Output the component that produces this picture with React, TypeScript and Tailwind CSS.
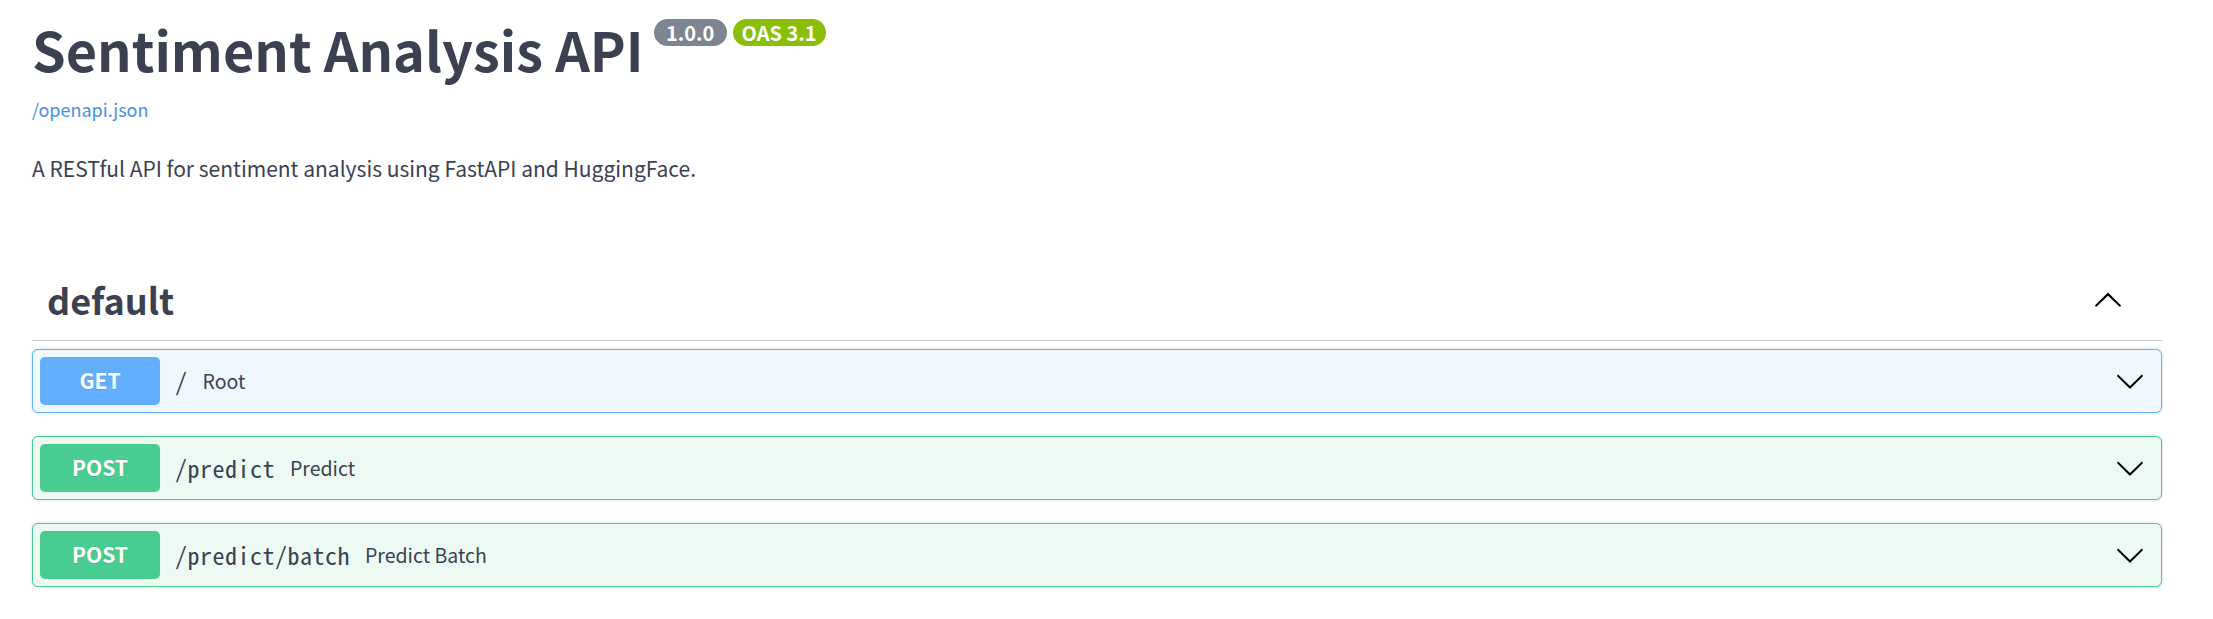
import React from "react";

const ArrowDown = () => (
  <svg width="30" height="30" viewBox="0 0 20 20" className="shrink-0">
    <path
      fill="#000"
      d="M17.418 6.109c.272-.268.709-.268.979 0s.271.701 0 .969l-7.908 7.83c-.27.268-.707.268-.979 0l-7.908-7.83c-.27-.268-.27-.701 0-.969.271-.268.709-.268.979 0L10 13.25l7.418-7.141z"
    />
  </svg>
);

const ArrowUp = () => (
  <svg width="30" height="30" viewBox="0 0 20 20" className="shrink-0">
    <path
      fill="#000"
      d="M17.418 14.908c.272.268.709.268.979 0s.271-.701 0-.969l-7.908-7.83c-.27-.268-.707-.268-.979 0l-7.908 7.83c-.27.268-.27.701 0 .969.271.268.709.268.979 0L10 7.767l7.418 7.141z"
    />
  </svg>
);

type Op = { method: string; path: string; summary: string };

const ops: Op[] = [
  { method: "GET", path: "/", summary: "Root" },
  { method: "POST", path: "/predict", summary: "Predict" },
  { method: "POST", path: "/predict/batch", summary: "Predict Batch" },
];

function OpBlock({ op }: { op: Op }) {
  const isGet = op.method === "GET";
  return (
    <div
      className={
        isGet
          ? "rounded-[6px] border border-[#61affe] bg-[#eff7ff] shadow-[0_0_3px_rgba(0,0,0,0.19)]"
          : "rounded-[6px] border border-[#49cc90] bg-[#edfaf4] shadow-[0_0_3px_rgba(0,0,0,0.19)]"
      }
    >
      <div className="flex items-center p-[7px] pr-[16px]">
        <div
          className={
            isGet
              ? "flex h-[48px] w-[120px] items-center justify-center rounded-[5px] bg-[#61affe] text-[21px] font-bold text-white [text-shadow:0_1px_0_rgba(0,0,0,0.1)]"
              : "flex h-[48px] w-[120px] items-center justify-center rounded-[5px] bg-[#49cc90] text-[21px] font-bold text-white [text-shadow:0_1px_0_rgba(0,0,0,0.1)]"
          }
        >
          {op.method}
        </div>
        <span className="px-[15px] font-['Noto_Sans_Mono_CJK_SC','Liberation_Mono',monospace] text-[24px] tracking-[0.5px] text-[#3b4151]">
          {op.path}
        </span>
        <span className="flex-1 text-[19.5px] text-[#3b4151]">{op.summary}</span>
        <ArrowDown />
      </div>
    </div>
  );
}

export default function App() {
  return (
    <div className="min-h-screen bg-white font-['Noto_Sans_CJK_SC','Noto_Sans',sans-serif] text-[#3b4151]">
      <div className="ml-[32px] w-[2130px] pt-[10px]">
        {/* info */}
        <div className="flex items-start">
          <h2 className="text-[54px] font-bold leading-[78px]">Sentiment Analysis API</h2>
          <span className="ml-[10px] mt-[9px] flex h-[27px] w-[73px] items-center justify-center rounded-full bg-[#7d8492] text-[20px] font-bold text-white">
            1.0.0
          </span>
          <span className="ml-[6px] mt-[9px] flex h-[27px] w-[93px] items-center justify-center rounded-full bg-[#89bf04] text-[20px] font-bold text-white">
            OAS 3.1
          </span>
        </div>
        <a className="mt-[8px] block text-[18px] leading-[26px] text-[#4990e2]">/openapi.json</a>
        <p className="mt-[31px] text-[21px] leading-[30px]">
          A RESTful API for sentiment analysis using FastAPI and HuggingFace.
        </p>

        {/* tag section */}
        <div className="mt-[75px] flex items-center justify-between border-b border-[#c4c6cb] py-[15px] pl-[15px] pr-[39px]">
          <h3 className="text-[36px] font-bold leading-[52px]">default</h3>
          <ArrowUp />
        </div>
        <div className="mt-[8px] flex flex-col gap-[23px]">
          {ops.map((op) => (
            <OpBlock key={op.path} op={op} />
          ))}
        </div>
      </div>
    </div>
  );
}
